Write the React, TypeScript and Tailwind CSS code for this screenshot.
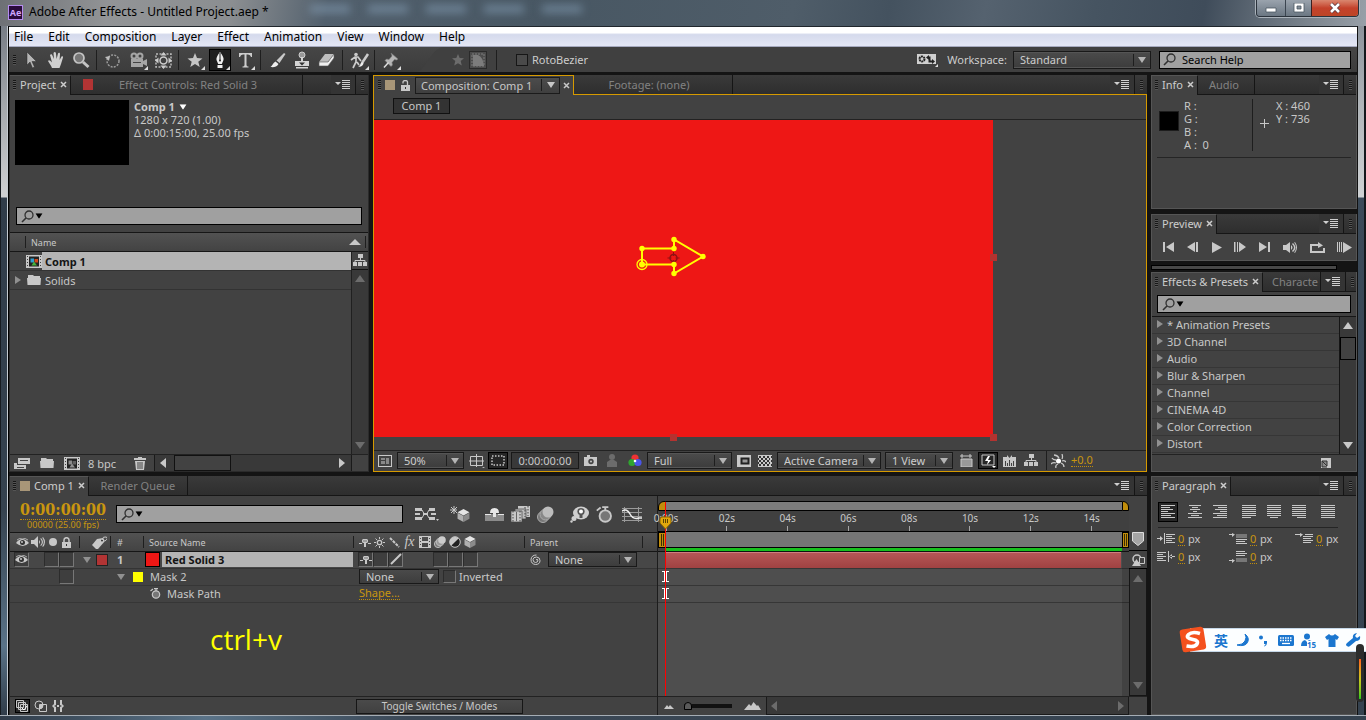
import type { ReactNode } from "react"
import { clsx } from "clsx"

const menus = ["File", "Edit", "Composition", "Layer", "Effect", "Animation", "View", "Window", "Help"]

const effectGroups = [
  "* Animation Presets",
  "3D Channel",
  "Audio",
  "Blur & Sharpen",
  "Channel",
  "CINEMA 4D",
  "Color Correction",
  "Distort",
]

const seconds = ["0:00s", "02s", "04s", "06s", "08s", "10s", "12s", "14s"]

type IconProps = { w?: number; h?: number; children: ReactNode; className?: string }

function Icon({ w = 16, h = 16, children, className }: IconProps) {
  return (
    <svg
      width={w}
      height={h}
      viewBox={`0 0 ${w} ${h}`}
      fill="currentColor"
      className={clsx("shrink-0", className)}
      aria-hidden="true"
    >
      {children}
    </svg>
  )
}

function Caret({ className }: { className?: string }) {
  return (
    <Icon w={8} h={6} className={className}>
      <path d="M0 0h8L4 6z" />
    </Icon>
  )
}

function RightTri({ className }: { className?: string }) {
  return (
    <Icon w={6} h={8} className={className}>
      <path d="M0 0l6 4-6 4z" />
    </Icon>
  )
}

function ArrowHead({ dir, className }: { dir: "up" | "down" | "left" | "right"; className?: string }) {
  const paths = { up: "M0 8h10L5 1z", down: "M0 2h10L5 9z", left: "M8 0v10L2 5z", right: "M2 0v10l6-5z" }
  return (
    <Icon w={10} h={10} className={className}>
      <path d={paths[dir]} />
    </Icon>
  )
}

function Grip() {
  return <span className="h-[10px] w-[3px] shrink-0 bg-[repeating-linear-gradient(#171717_0_1px,#555_1px_2px)]" />
}

function Divider({ className }: { className?: string }) {
  return <span className={clsx("w-px shrink-0 bg-[#1e1e1e]", className)} />
}

/* Tab strip shared by every panel */
function TabStrip({ children, gold }: { children: ReactNode; gold?: boolean }) {
  return (
    <div
      className={clsx(
        "flex h-5 shrink-0 border-b bg-linear-to-b from-[#3a3a3a] to-[#2e2e2e]",
        gold ? "border-[#d69a00]" : "border-[#161616]",
      )}
    >
      {children}
      <span className="min-w-0 flex-1" />
      <button type="button" aria-label="Panel menu" className="z-10 flex w-6 shrink-0 items-center justify-center bg-[#343434] pr-[2px] pb-px text-[#cfcfcf]">
        <Icon w={15} h={9}>
          <path d="M0 2h6L3 5zM7 0h8v1H7zM7 2h8v1H7zM7 4h8v1H7zM7 6h8v1H7zM7 8h8v1H7z" />
        </Icon>
      </button>
      <span className="flex w-[13px] shrink-0 items-center justify-center border-l border-[#151515]">
        <Grip />
      </span>
    </div>
  )
}

function ActiveTab({ label, children }: { label: string; children?: ReactNode }) {
  return (
    <div className="-mb-px flex shrink-0 items-center gap-1 border-t border-r border-t-[#555] border-r-[#161616] bg-[#424242] pr-[3px] pb-[2px] pl-[3px]">
      <Grip />
      {children}
      <button type="button" className="text-[#cdcdcd]">{label}</button>
      <button type="button" aria-label={`Close ${label}`} className="text-[#cdcdcd]">
        <Icon w={7} h={7}>
          <path d="M1 1l5 5M6 1L1 6" stroke="currentColor" strokeWidth="1.5" />
        </Icon>
      </button>
    </div>
  )
}

function Tab({ label, className }: { label: string; className?: string }) {
  return (
    <button type="button" className={clsx("shrink-0 border-r border-[#151515] text-[#828282]", className)}>
      {label}
    </button>
  )
}

type DropdownProps = { label: string; value: string; className?: string; compact?: boolean }

function Dropdown({ label, value, className, compact }: DropdownProps) {
  return (
    <span className={clsx("relative flex shrink-0 border border-[#191919]", className)}>
      <select
        aria-label={label}
        className={clsx(
          "w-full appearance-none bg-linear-to-b from-[#4a4a4a] to-[#3d3d3d] pr-4 pl-[6px] text-[#cdcdcd]",
          !compact && "border-y border-[#555] pb-[2px]",
        )}
      >
        <option>{value}</option>
      </select>
      <span className="pointer-events-none absolute inset-y-[2px] right-1 flex items-center gap-1 text-[#b4b4b4]">
        <Divider className="h-full" />
        <Caret />
      </span>
    </span>
  )
}

function SearchIcon() {
  return (
    <Icon w={13} h={13} className="text-[#303030]">
      <circle cx="8" cy="5" r="4" fill="none" stroke="currentColor" strokeWidth="1.3" />
      <path d="M5 8L1 12" stroke="currentColor" strokeWidth="1.6" />
    </Icon>
  )
}

function SearchBox({ label, className }: { label: string; className?: string }) {
  return (
    <label className={clsx("flex h-[18px] items-center gap-px border border-black bg-[#a0a0a0] px-1 text-black", className)}>
      <SearchIcon />
      <Caret className="scale-90" />
      <input type="text" aria-label={label} className="w-full min-w-0 outline-none" />
    </label>
  )
}

function TitleBar() {
  return (
    <header className="flex h-[26px] shrink-0 items-start bg-[linear-gradient(100deg,#6d7075_0%,#929496_8%,#8b8e91_17%,#52606d_24%,#485763_40%,#4f5d69_58%,#44525f_65%,#55626f_72%,#465461_80%,#3f4c5a_88%,#7d868f_96%,#98a0a8_100%)]">
      <div className="flex w-[290px] shrink-0 items-center gap-[6px] pt-1 pl-2">
        <span className="flex h-[15px] w-[15px] items-center justify-center border border-[#b58cf0] bg-[#2a0b3c] text-[9px] font-bold text-[#cda6ff]">
          Ae
        </span>
        <h1 className="text-[12px] leading-4 text-black">Adobe After Effects - Untitled Project.aep *</h1>
      </div>
      <div className="flex flex-1 gap-[18px] pt-[5px] pl-5">
        {[0, 1, 2, 3, 4].map((n) => (
          <span key={n} className="h-2 w-10 bg-[#8da9c4]/50 blur-xs" />
        ))}
      </div>
      <div className="mr-[7px] flex h-[17px] overflow-hidden rounded-b-[4px] border border-t-0 border-[#2b333c] text-white shadow-[0_0_0_1px_#aab2ba]">
        <button type="button" aria-label="Minimize" className="flex w-7 items-center justify-center bg-linear-to-b from-[#9aa3ad] to-[#6b7783]">
          <Icon w={12} h={10}>
            <path d="M1 5h10v4H1z" stroke="#4a5561" strokeWidth=".8" />
          </Icon>
        </button>
        <button type="button" aria-label="Restore" className="flex w-[26px] items-center justify-center border-l border-[#3b4550] bg-linear-to-b from-[#9aa3ad] to-[#6b7783]">
          <Icon w={12} h={10}>
            <path fillRule="evenodd" d="M1 0h10v9H1zM4 3v3h4V3z" stroke="#4a5561" strokeWidth=".8" />
          </Icon>
        </button>
        <button type="button" aria-label="Close" className="flex w-[47px] items-center justify-center border-l border-[#3b2020] bg-linear-to-b from-[#d9866f] via-[#c4412b] to-[#bd4526]">
          <Icon w={12} h={12}>
            <path d="M2 2l8 8M10 2l-8 8" stroke="#53333a" strokeWidth="4" />
            <path d="M2 2l8 8M10 2l-8 8" stroke="#fff" strokeWidth="2.6" />
          </Icon>
        </button>
      </div>
    </header>
  )
}

function MenuBar() {
  return (
    <nav className="flex h-[21px] shrink-0 items-center gap-[15px] border-t border-b border-t-[#20262c] border-b-[#a6aabf] bg-linear-to-b from-white from-30% via-[#d5daec] via-40% to-[#e4e7f5] px-[5px] text-[12px] text-black">
      {menus.map((menu) => (
        <button type="button" key={menu}>
          {menu}
        </button>
      ))}
    </nav>
  )
}

const corner = <path d="M21 21v-4l-4 4z" fill="#ddd" />

const tools: { name: string; active?: boolean; art: ReactNode }[][] = [
  [
    { name: "Selection", art: <path d="M7 3v13l3-3 2.500 6 2-1-2.500-5.500h4.500z" fill="#b5b5b5" stroke="#2a2a2a" strokeWidth=".5" /> },
    {
      name: "Hand",
      art: (
        <path
          d="M7 19c-1-3-3-5-4-7 1-1.500 2-.5 4 1.500L5 6c1-1.300 2-.6 2.400.5L9 10 8.500 4c.7-1.400 2-1.300 2.400 0l.7 6L13 4.500c.7-1.200 2-.8 2 .5l-.4 6 1.900-3.500c1-.9 1.800 0 1.500 1L16 15l-1.500 4z"
          fill="#cfcfcf"
        />
      ),
    },
    {
      name: "Zoom",
      art: (
        <>
          <circle cx="9" cy="9" r="5" fill="#777" stroke="#c5c5c5" strokeWidth="1.700" />
          <path d="M13 13l5.500 5" stroke="#c5c5c5" strokeWidth="3" />
        </>
      ),
    },
  ],
  [
    {
      name: "Rotate",
      art: (
        <>
          <circle cx="11" cy="12" r="6" fill="none" stroke="#9a9a9a" strokeWidth="1.500" strokeDasharray="2 1.200" />
          <path d="M3 8l5-1-1 5z" fill="#bdbdbd" />
        </>
      ),
    },
    {
      name: "Camera",
      art: (
        <>
          <circle cx="7" cy="7" r="2.500" fill="none" stroke="#a5a5a5" strokeWidth="2" />
          <circle cx="13" cy="7" r="2.500" fill="none" stroke="#a5a5a5" strokeWidth="2" />
          <path d="M4 10h12v2l4-2v7l-4-2v3H4z" fill="#a5a5a5" />
          <path d="M6 13h8v1H6z" fill="#444" />
          {corner}
        </>
      ),
    },
    {
      name: "Pan Behind",
      art: (
        <>
          <path d="M4 5h15v13H4z" fill="none" stroke="#bbb" strokeWidth="1.500" strokeDasharray="2 1.500" />
          <circle cx="11.500" cy="11.500" r="3.500" fill="none" stroke="#ccc" strokeWidth="1.500" />
          <path d="M11.500 3l3 3.500h-6zM11.500 20l3-3.500h-6zM3 11.500l3.500-3v6zM20 11.500l-3.500-3v6z" fill="#ccc" />
        </>
      ),
    },
  ],
  [
    {
      name: "Shape",
      art: (
        <>
          <path d="M11 4l2 5 5.500.4-4.200 3.400L15.700 18 11 15l-4.700 3 1.400-5.200-4.200-3.400L9 9z" fill="#c5c5c5" />
          {corner}
        </>
      ),
    },
    {
      name: "Pen",
      active: true,
      art: (
        <>
          <path d="M11 3c2.500 3 4 6 3.500 8l-1.700 4H9.200l-1.700-4C7 9 8.500 6 11 3zM8.500 16h5v3h-5z" fill="#f0f0f0" />
          <path d="M11 4v7" stroke="#222" />
          <circle cx="11" cy="11.500" r="1" fill="#222" />
          {corner}
        </>
      ),
    },
    {
      name: "Type",
      art: (
        <>
          <path d="M5 4h13v4h-1q-.5-2.500-3-2.500h-1.500V16q0 1.500 2 1.500v1h-6v-1q2 0 2-1.500V5.500H9Q6.500 5.500 6 8H5z" fill="#cdcdcd" />
          {corner}
        </>
      ),
    },
  ],
  [
    {
      name: "Brush",
      art: (
        <>
          <path d="M18 4l1.500 1-6 9-3-2.500z" fill="#c9c9c9" />
          <path d="M9.500 12.500l3 2.500c-1.500 3-5 3.500-8 3 2-1 2.500-4.500 5-5.500z" fill="#eee" />
        </>
      ),
    },
    {
      name: "Clone Stamp",
      art: (
        <>
          <circle cx="11" cy="6" r="3" fill="#999" stroke="#ccc" />
          <path d="M10 8h2v4h6v5H4v-5h6zM5 18h12v1.500H5z" fill="#d4d4d4" />
          <path d="M8 13.500h6L11 16.500z" fill="#333" />
        </>
      ),
    },
    {
      name: "Eraser",
      art: (
        <>
          <path d="M9 5h9l-6 8H3z" fill="#bdbdbd" />
          <path d="M3 13h9l6-8v4l-6 8H3z" fill="#f0f0f0" stroke="#555" strokeWidth=".6" />
        </>
      ),
    },
  ],
  [
    {
      name: "Roto Brush",
      art: (
        <>
          <circle cx="8" cy="5.500" r="1.800" fill="#ccc" />
          <path d="M3 11l4-3h3l3 4M8 8v5l-3 6M9 13l2 3" fill="none" stroke="#ccc" strokeWidth="1.700" />
          <path d="M20 5l-6 9" stroke="#ccc" strokeWidth="2.500" />
          <path d="M14 13c-2 1-1 3.500-4 4.500 3 .5 5-.5 5.500-3z" fill="#eee" />
          {corner}
        </>
      ),
    },
  ],
  [
    {
      name: "Puppet Pin",
      art: (
        <>
          <path d="M11 4l7 6-1.500 1-2-.5-2.500 3 .5 2.500-1.500 1.500-6-6L6.500 10 9 10.500 12 7z" fill="#b5b5b5" stroke="#777" strokeWidth=".6" />
          <path d="M8.500 13.500L4 18.500" stroke="#ddd" strokeWidth="1.500" />
          {corner}
        </>
      ),
    },
  ],
]

function Toolbar() {
  return (
    <div className="flex h-[25px] shrink-0 items-center bg-linear-to-b from-[#464646] to-[#3c3c3c] pr-[6px] pl-1 text-[#cdcdcd]">
      <Grip />
      <span className="w-[2px]" />
      {tools.map((group, g) => (
        <div key={g} className="flex items-center">
          {group.map((tool) => (
            <span key={tool.name} className="flex w-[25px] justify-center">
              <button
                type="button"
                aria-label={tool.name}
                className={clsx("flex h-[22px] w-[22px] items-center justify-center", tool.active && "border border-black bg-[#202020]")}
              >
                <Icon w={22} h={22}>{tool.art}</Icon>
              </button>
            </span>
          ))}
          {g < tools.length - 1 && <Divider className="mr-[3px] ml-[3px] h-5" />}
        </div>
      ))}
      <Icon w={42} h={25}>
        <path d="M13 25c10 0 14-25 29-25v25z" fill="#404040" />
      </Icon>
      <div className="flex h-full flex-1 items-center bg-[#404040]">
        <Icon w={14} h={14} className="mr-1 ml-[6px] text-[#6c6c6c]">
          <path d="M7 1l1.700 4 4.300.3-3.300 2.800 1.100 4.400L7 10.200l-3.800 2.300 1.100-4.400L1 5.300 5.300 5z" />
        </Icon>
        <button type="button" aria-label="Tool creates mask" className="border border-[#2a2a2a] bg-[#4c4c4c] text-[#7c7c7c]">
          <Icon w={16} h={16}>
            <path d="M2 2h12v12H2z" fill="none" stroke="currentColor" strokeDasharray="2 1" />
            <path d="M3 3h5q5 2 6 11H3z" />
          </Icon>
        </button>
        <Divider className="mx-[9px] h-5" />
        <label className="ml-[10px] flex items-center gap-1">
          <input type="checkbox" className="h-3 w-3 appearance-none border border-[#161616] bg-[#4a4a4a]" />
          RotoBezier
        </label>
        <span className="flex-1" />
        <Icon w={23} h={16} className="mr-2">
          <path d="M1 2h19v10H1z" fill="#d0d0d0" />
          <circle cx="6" cy="7" r="2.500" fill="none" stroke="#222" strokeWidth="2" strokeDasharray="2 .6" />
          <path d="M10 5.500L13 3v1.500h1.500v4H16V7l3 2.500-3 2.500v-1.500h-3.500v-4H13V8z" fill="#222" />
          <path d="M22 15v-3l-3 3z" fill="#ddd" />
        </Icon>
        <span className="mr-[6px]">Workspace:</span>
        <Dropdown label="Workspace" value="Standard" className="h-[18px] w-[138px]" />
        <label className="ml-2 flex h-[18px] w-[192px] items-center gap-[6px] border border-black bg-[#a0a0a0] px-[3px]">
          <SearchIcon />
          <input type="text" aria-label="Search Help" placeholder="Search Help" className="w-full min-w-0 outline-none placeholder:text-black" />
        </label>
      </div>
    </div>
  )
}

function FlowIcon() {
  return (
    <Icon w={14} h={13}>
      <path d="M5 0h5v4H5zM0 8h4v4H0zM5 8h4v4H5zM10 8h4v4h-4z" />
      <path d="M7.500 4v3M2 8V6.500h10V8" fill="none" stroke="currentColor" />
    </Icon>
  )
}

function FilmIcon() {
  return (
    <Icon w={16} h={13}>
      <path fillRule="evenodd" d="M0 0h16v13H0zM4 2v9h8V2zM1 1v1h1V1zm0 3v1h1V4zm0 3v1h1V7zm0 3v1h1v-1zM14 1v1h1V1zm0 3v1h1V4zm0 3v1h1V7zm0 3v1h1v-1z" />
      <path d="M3 1.500h10v10H3z" fill="#222" />
      <path d="M4.500 3.500h3.500v4H4.500z" fill="#2f9fd0" />
      <path d="M8.500 4H12v3.500H8.500z" fill="#d2481c" />
      <path d="M5.500 10.500l2.500-4 3 4z" fill="#45b13c" />
    </Icon>
  )
}

function FolderIcon() {
  return (
    <Icon w={14} h={12}>
      <path d="M1 1h5l1 1h6v2H1zM0 4h14l-.5 7H.5z" />
    </Icon>
  )
}

function ProjectPanel() {
  return (
    <section className="flex w-[360px] shrink-0 flex-col border border-t-0 border-[#2b2b2b] bg-[#424242]">
      <TabStrip>
        <ActiveTab label="Project" />
        <button type="button" className="flex w-[232px] items-center gap-[26px] border-r border-[#151515] pl-3 text-[#828282]">
          <span className="h-[11px] w-[10px] bg-[#b23434]" />
          Effect Controls: Red Solid 3
        </button>
      </TabStrip>
      <div className="flex gap-[5px] px-[5px] pt-[5px]">
        <div className="h-[65px] w-[114px] bg-black" />
        <div className="leading-[13px]">
          <p className="flex items-center gap-1 font-bold">
            Comp 1 <Caret className="scale-90 text-white" />
          </p>
          <p>1280 x 720 (1.00)</p>
          <p>Δ 0:00:15:00, 25.00 fps</p>
        </div>
      </div>
      <SearchBox label="Search project" className="mx-[6px] mt-[42px]" />
      <div className="mt-[7px] flex h-5 shrink-0 items-center border-y border-[#161616] bg-linear-to-b from-[#525252] to-[#434343] px-[2px] text-[9px]">
        <Divider className="ml-[13px] h-3" />
        <span className="flex-1 pl-[5px]">Name</span>
        <Icon w={12} h={7}>
          <path d="M0 6h12L6 0z" />
        </Icon>
        <Divider className="ml-1 h-3" />
      </div>
      <div className="flex min-h-0 flex-1">
        <div className="flex-1">
          <button type="button" className="flex h-[19px] w-full items-center border-b border-[#333] pl-4">
            <FilmIcon />
            <span className="flex h-full flex-1 items-center bg-[#b4b4b4] pl-[3px] font-bold text-[#151515]">Comp 1</span>
          </button>
          <button type="button" className="flex h-[19px] w-full items-center border-b border-[#333] pl-[5px]">
            <RightTri className="mr-[6px] text-[#909090]" />
            <FolderIcon />
            <span className="pl-1">Solids</span>
          </button>
        </div>
        <div className="flex w-[17px] flex-col items-center border-l border-[#202020] bg-[#393939] text-[#6c6c6c]">
          <span className="flex h-[18px] w-full items-center justify-center border-b border-[#111] bg-[#424242] text-[#c8c8c8]">
            <FlowIcon />
          </span>
          <ArrowHead dir="up" className="mt-1" />
          <span className="flex-1" />
          <ArrowHead dir="down" className="mb-1" />
        </div>
      </div>
      <div className="flex h-[17px] shrink-0 items-center border-t border-[#222] pl-1">
        <button type="button" aria-label="Interpret footage">
          <Icon w={16} h={13}>
            <path d="M4 1h12v6H4zM0 6h3v6H0zM1 8h11v4H1z" />
            <path d="M6 3h8v1H6zM3 10h7v1H3z" fill="#444" />
          </Icon>
        </button>
        <button type="button" aria-label="New folder" className="ml-[10px]"><FolderIcon /></button>
        <button type="button" aria-label="New composition" className="ml-[10px] grayscale"><FilmIcon /></button>
        <button type="button" className="ml-2 w-[46px] text-left">8 bpc</button>
        <button type="button" aria-label="Delete">
          <Icon w={12} h={13}>
            <path d="M4 0h4v1h4v2H0V1h4zM1 4h10l-1 9H2z" />
            <path d="M4 5v7M6 5v7M8 5v7" stroke="#444" />
          </Icon>
        </button>
        <div className="ml-2 flex h-full flex-1 items-center border-x border-[#1a1a1a] bg-[#393939]">
          <ArrowHead dir="left" className="mr-[6px] ml-[3px]" />
          <span className="h-full w-[57px] border border-[#111] bg-[#424242]" />
          <span className="flex-1" />
          <ArrowHead dir="right" className="mr-1" />
        </div>
        <span className="w-4" />
      </div>
    </section>
  )
}

function Viewer() {
  return (
    <div className="relative min-h-0 flex-1 overflow-hidden border-t border-[#222] bg-[#424242]">
      <div className="h-[317px] w-[619px] bg-[#ee1715]" />
      {/* mask path and layer handles on the composition canvas */}
      <svg className="absolute top-0 left-0" width="630" height="325" viewBox="0 0 630 325" aria-hidden="true">
        <path d="M616 134h7v7h-7zM616 314h7v7h-7zM296 314h7v7h-7z" fill="#b33330" />
        <circle cx="299.500" cy="138" r="3.500" fill="none" stroke="#8e1212" strokeWidth="1.500" />
        <path d="M293.500 138h4M301.500 138h4M299.500 132v4M299.500 140v4" stroke="#8e1212" />
        <path d="M268 144.500v-16h32v-9l29 17-29 17v-9z" fill="none" stroke="#ff0" strokeWidth="2" />
        <g fill="#ff0">
          <circle cx="268" cy="128.500" r="2.700" />
          <circle cx="300" cy="128.500" r="2.700" />
          <circle cx="300" cy="119.500" r="2.700" />
          <circle cx="329" cy="136.500" r="2.700" />
          <circle cx="300" cy="153.500" r="2.700" />
          <circle cx="300" cy="144.500" r="2.700" />
          <circle cx="268" cy="144.500" r="3" />
        </g>
        <circle cx="268" cy="144.500" r="5" fill="none" stroke="#ff0" strokeWidth="1.300" />
      </svg>
    </div>
  )
}

function CompositionPanel() {
  return (
    <section className="flex min-w-0 flex-1 flex-col">
      <TabStrip gold>
        <div className="-mb-px flex w-[201px] items-center border border-b-0 border-[#d69a00] bg-[#424242] pb-px pl-1">
          <Grip />
          <span className="ml-[4px] h-[10px] w-[10px] bg-[#a89678]" />
          <Icon w={9} h={11} className="mr-[5px] ml-[6px]">
            <path d="M0 5h9v6H0z" />
            <path d="M2 3.500V2.500q0-2 2.300-2t2.200 2V5" fill="none" stroke="currentColor" strokeWidth="1.300" />
            <path d="M4 7h1v2H4z" fill="#333" />
          </Icon>
          <button type="button" className="flex h-[17px] flex-1 items-center justify-between border border-[#1b1b1b] bg-linear-to-b from-[#4c4c4c] to-[#3f3f3f] pr-1 pl-[5px]">
            Composition: Comp 1
            <span className="flex items-center gap-[5px]">
              <Divider className="h-3" />
              <Caret />
            </span>
          </button>
          <button type="button" aria-label="Close Composition" className="px-[3px]">
            <Icon w={7} h={7}>
              <path d="M1 1l5 5M6 1L1 6" stroke="currentColor" strokeWidth="1.500" />
            </Icon>
          </button>
        </div>
        <Tab label="Footage: (none)" className="w-[159px] pr-2" />
      </TabStrip>
      <div className="flex min-h-0 flex-1 flex-col border border-t-0 border-[#d69a00] bg-[#424242]">
        <div className="flex h-6 shrink-0 pt-[3px] pl-[19px]">
          <button type="button" className="h-4 w-[57px] border border-[#111] bg-[#333] leading-3">Comp 1</button>
        </div>
        <Viewer />
        <div className="flex h-[21px] shrink-0 items-center border-t border-[#222] pb-px pl-1">
          <Icon w={14} h={12} className="mr-[5px]">
            <path fillRule="evenodd" d="M0 0h14v12H0zM1 1v10h12V1z" />
            <path d="M3 3h4v2H3zM3 6h4v3H3zM8 3h3v6H8z" fill="#888" />
          </Icon>
          <Dropdown label="Magnification" value="50%" className="h-[17px] w-[67px]" />
          <Icon w={16} h={15} className="ml-[5px]">
            <path d="M1.500 3.500h12v9h-12zM0 8h15M7.500 1v13" fill="none" stroke="currentColor" />
            <path d="M13 14h3l-1.500 1z" />
          </Icon>
          <button type="button" aria-label="Region of interest" className="mx-[3px] border border-black bg-[#262626]">
            <Icon w={18} h={15}>
              <path d="M3 3h12v9H3z" fill="none" stroke="currentColor" strokeWidth="1.500" strokeDasharray="1.500 1.500" />
            </Icon>
          </button>
          <button type="button" className="h-[17px] w-[68px] border border-[#191919] bg-[#393939]">0:00:00:00</button>
          <Icon w={13} h={11} className="ml-[5px]">
            <path d="M0 2h3V0h3v2h7v9H0z" />
            <circle cx="7" cy="6.500" r="2.700" fill="#444" />
            <circle cx="7" cy="6.500" r="1" />
          </Icon>
          <Icon w={12} h={13} className="ml-[9px] text-[#6c6c6c]">
            <circle cx="6" cy="3" r="3" />
            <path d="M1 13V8l3-2h4l3 2v5z" />
          </Icon>
          <Icon w={15} h={13} className="mr-1 ml-[10px]">
            <circle cx="7" cy="4" r="3.600" fill="#e33" />
            <circle cx="4" cy="8.500" r="3.600" fill="#2fa52f" />
            <circle cx="10" cy="8.500" r="3.600" fill="#4a55ea" />
            <circle cx="7" cy="7" r="1.300" fill="#fff" />
          </Icon>
          <Dropdown label="Resolution" value="Full" className="h-[17px] w-[85px]" />
          <Icon w={14} h={12} className="ml-[5px]">
            <path d="M0 0h14v12H0z" />
            <path d="M4.500 3.500h7v5h-7z" fill="#999" stroke="#222" strokeWidth="2" />
          </Icon>
          <Icon w={14} h={12} className="mr-[5px] ml-[7px]">
            <path d="M0 0h14v12H0z" />
            <path d="M1 2h13M-1 4h13M1 6h13M-1 8h13M1 10h13" stroke="#333" strokeWidth="2" strokeDasharray="2 2" />
          </Icon>
          <Dropdown label="3D view" value="Active Camera" className="h-[17px] w-[104px]" />
          <Dropdown label="View layout" value="1 View" className="ml-1 h-[17px] w-[68px]" />
          <Icon w={13} h={13} className="mr-[5px] ml-[7px]">
            <path d="M1 5h11v8H1z" fill="#999" stroke="currentColor" />
            <path d="M0 2h12M2 0v4M10 0v4" stroke="currentColor" />
          </Icon>
          <button type="button" aria-label="Fast previews" className="border border-black bg-[#262626]">
            <Icon w={18} h={15}>
              <path d="M3 2h12v10H3z" fill="none" stroke="currentColor" />
              <path d="M9 3L6 8h3l-1 4 4-5H9l2-4zM13 13h4l-2 2z" fill="#fff" />
            </Icon>
          </button>
          <Icon w={13} h={12} className="ml-[5px]">
            <path fillRule="evenodd" d="M0 2h4v-2l2.500 3L9 0v2h4v10H0zM2 6v5h1V6zm4-1v6h1V5zm4 1v5h1V6zM4 8v3h1V8zm4 0v3h1V8z" />
          </Icon>
          <span className="mx-2"><FlowIcon /></span>
          <Divider className="h-[19px]" />
          <Icon w={15} h={14} className="mx-1">
            <circle cx="7.500" cy="7" r="2.500" fill="#fff" />
            <path d="M8 4Q6 1 3 1M11 5q1-2 0-5M11 7q2-1 4 1M10 9q3 1 3 4M7 10q-3 1-2 4M5 9q-3-1-5 1M5 6Q2 6 1 4" fill="none" stroke="currentColor" strokeWidth="1.300" />
          </Icon>
          <button type="button" className="ml-px border-b border-dotted border-[#c08d0c] leading-3 text-[#c9960f]">+0.0</button>
        </div>
      </div>
    </section>
  )
}

const transport: { name: string; w: number; path: string }[] = [
  { name: "First frame", w: 12, path: "M0 0h2v10H0zM11 0v10L3 5z" },
  { name: "Previous frame", w: 12, path: "M8 0v10L0 5zM9 0h2v10H9z" },
  { name: "Play", w: 10, path: "M0 0v11l10-5.500z" },
  { name: "Next frame", w: 12, path: "M0 0h1.500v10H0zM3 0h1v10H3zM5 0v10l7-5z" },
  { name: "Last frame", w: 12, path: "M0 0v10l8-5zM9 0h2v10H9z" },
  { name: "Mute audio", w: 14, path: "M0 3h3l4-3v11L3 8H0zM8 3q3 2.500 0 5zM10 1q5 4.500 0 9l-1-1q4-3.500 0-7zM12 0q4 5.500 0 11l-.8-.6q3.600-5 0-9.800z" },
  { name: "Loop", w: 15, path: "M0 2h8V0l5 3.500L8 6V4H2v5h11V6h2v5H0z" },
  { name: "RAM preview", w: 15, path: "M0 0h1v10H0zM2 0h1v10H2zM4 0h1v10H4zM6 0v11l9-5.500z" },
]

function RightColumn() {
  return (
    <aside className="flex w-[206px] shrink-0 flex-col">
      <section className="flex h-[134px] shrink-0 flex-col border border-t-0 border-[#555] bg-[#424242]">
        <TabStrip>
          <ActiveTab label="Info" />
          <Tab label="Audio" className="w-[57px] pr-1" />
        </TabStrip>
        <div className="flex px-[7px] pt-1">
          <span className="mt-3 h-5 w-5 border border-[#1d1d1d] bg-black" />
          <div className="ml-[5px] w-[69px] border-r border-[#1e1e1e] leading-[13px]">
            <p>R :</p>
            <p>G :</p>
            <p>B :</p>
            <p>A :&nbsp; 0</p>
          </div>
          <Icon w={10} h={10} className="mt-5 ml-[7px]">
            <path d="M4.500 0v9M0 4.500h9" stroke="currentColor" />
          </Icon>
          <div className="ml-[6px] leading-[13px]">
            <p>X : 460</p>
            <p>Y : 736</p>
          </div>
        </div>
        <span className="mx-[5px] mt-[6px] h-px bg-[#252525]" />
      </section>

      <section className="mt-[5px] flex shrink-0 flex-col border border-t-0 border-[#555] bg-[#424242]">
        <TabStrip>
          <ActiveTab label="Preview" />
        </TabStrip>
        <div className="flex h-[26px] items-center justify-between pr-1 pl-[11px]">
          {transport.map((button) => (
            <button type="button" key={button.name} aria-label={button.name}>
              <Icon w={button.w} h={11}>
                <path d={button.path} />
              </Icon>
            </button>
          ))}
        </div>
      </section>

      <span className="mt-1 mr-5 mb-[2px] h-[5px] shrink-0 border border-black bg-[#484848]" />

      <section className="flex min-h-0 flex-1 flex-col border border-t-0 border-[#555] bg-[#424242]">
        <TabStrip>
          <ActiveTab label="Effects & Presets" />
          <button type="button" className="w-[58px] shrink-0 border-r border-[#151515] pl-[9px] text-left whitespace-nowrap text-[#828282]">
            Characte
          </button>
        </TabStrip>
        <SearchBox label="Search effects" className="mx-[5px] mt-[3px] shrink-0" />
        <div className="mt-[3px] flex min-h-0 flex-1 border-t border-[#161616]">
          <ul className="min-w-0 flex-1 overflow-hidden">
            {effectGroups.map((name) => (
              <li key={name}>
                <button type="button" className="flex h-[17px] w-full items-center gap-1 border-b border-[#363636] pb-[2px] pl-[5px]">
                  <RightTri className="text-[#909090]" />
                  {name}
                </button>
              </li>
            ))}
          </ul>
          <div className="flex w-[17px] flex-col items-center border-l border-[#151515] bg-[#393939]">
            <ArrowHead dir="up" className="my-1" />
            <span className="mt-[2px] h-[23px] w-full border border-black bg-[#424242]" />
            <span className="flex-1" />
            <ArrowHead dir="down" className="mb-1" />
          </div>
        </div>
        <div className="flex h-[17px] shrink-0 items-center justify-end border-t border-[#222] pr-[25px]">
          <button type="button" aria-label="New animation preset">
            <Icon w={10} h={10}>
              <path d="M0 0h10v10H0z" />
              <path d="M1 3h5v5zM1 3v6h5" fill="#888" stroke="#333" />
            </Icon>
          </button>
        </div>
      </section>
    </aside>
  )
}

const EyeIcon = () => (
  <Icon w={13} h={9}>
    <path d="M0 5q6-8 13 0-6 6-13 0z" />
    <circle cx="6.500" cy="4.500" r="2.500" fill="#333" />
    <circle cx="6" cy="4" r="1" />
    <path d="M1 2q5-4 11 0" fill="none" stroke="currentColor" strokeWidth=".8" />
  </Icon>
)

const ShyIcon = () => (
  <Icon w={12} h={9}>
    <path d="M0 5h3v1H0zM9 5h3v1H9zM4 1h4l1 1v2L8 5H7v4H5V5H4L3 4V2z" />
    <path d="M4.500 2.500h1v1h-1zM6.500 2.500h1v1h-1z" fill="#222" />
  </Icon>
)

const CubeIcon = ({ size = 12 }: { size?: number }) => (
  <svg width={size} height={size} viewBox="0 0 12 12" aria-hidden="true">
    <path d="M6 0l5.500 3L6 6 .5 3z" fill="#e5e5e5" />
    <path d="M.5 3.500L6 6.500V12L.5 9z" fill="#b0b0b0" />
    <path d="M11.500 3.500L6 6.500V12l5.500-3z" fill="#8a8a8a" />
  </svg>
)

const StopwatchIcon = ({ size = 11 }: { size?: number }) => (
  <svg width={size} height={size} viewBox="0 0 11 11" fill="none" stroke="#c8c8c8" aria-hidden="true">
    <circle cx="6" cy="6.500" r="3.700" strokeWidth="1.200" fill="#777" />
    <path d="M4 .7h4M6 1v2M.5 3L3 1" strokeWidth="1.200" />
  </svg>
)

const headerIcons: { name: string; art: ReactNode }[] = [
  { name: "Shy", art: <ShyIcon /> },
  {
    name: "Collapse",
    art: (
      <Icon w={11} h={11}>
        <circle cx="5.500" cy="5.500" r="2.200" fill="none" stroke="currentColor" strokeWidth="1.300" />
        <path d="M5.500 0v2M5.500 9v2M0 5.500h2M9 5.500h2M1.500 1.500L3 3M8 8l1.500 1.500M9.500 1.500L8 3M3 8L1.500 9.500" stroke="currentColor" />
      </Icon>
    ),
  },
  {
    name: "Quality",
    art: (
      <Icon w={11} h={11}>
        <path d="M1 1l9 9" stroke="currentColor" strokeWidth="2" strokeDasharray="3 1" />
      </Icon>
    ),
  },
  { name: "Effects", art: <span className="font-['Liberation_Serif',serif] text-[14px] leading-3 italic">fx</span> },
  {
    name: "Frame blend",
    art: (
      <Icon w={12} h={12}>
        <path fillRule="evenodd" d="M0 0h12v12H0zM3 1v4h6V1zM3 7v4h6V7zM1 2v1h1V2zm0 3v1h1V5zm0 3v1h1V8zm9-6v1h1V2zm0 3v1h1V5zm0 3v1h1V8z" />
      </Icon>
    ),
  },
  {
    name: "Motion blur",
    art: (
      <Icon w={12} h={12}>
        <circle cx="4" cy="8" r="3.600" fill="#777" stroke="#bbb" />
        <circle cx="6" cy="6" r="3.800" fill="#999" stroke="#bbb" />
        <circle cx="8" cy="4" r="3.800" fill="#ccc" />
      </Icon>
    ),
  },
  {
    name: "Adjustment",
    art: (
      <Icon w={12} h={12}>
        <circle cx="6" cy="6" r="5.300" fill="#222" stroke="currentColor" />
        <path d="M9.800 2.200A5.300 5.300 0 0 0 2.200 9.800z" />
      </Icon>
    ),
  },
  { name: "3D layer", art: <CubeIcon /> },
]

const timelineActions: { name: string; margin: string; art: ReactNode }[] = [
  {
    name: "Mini flowchart",
    margin: "ml-3",
    art: (
      <Icon w={24} h={14}>
        <path d="M0 1h7v3H0zM0 6h5v2H0zM0 10h7v3H0zM14 1h6v3h-6zM16 6h5v2h-5zM14 10h6v3h-6zM8 6h5v2H8z" />
        <path d="M7 3l2 3.500M14 3l-2 3.500M7 11l2-3.500M14 11l-2-3.500" fill="none" stroke="currentColor" />
        <path d="M21 12h3l-1.500 2z" />
      </Icon>
    ),
  },
  {
    name: "Draft 3D",
    margin: "ml-[11px]",
    art: (
      <span className="flex items-end">
        <Icon w={7} h={16}>
          <path d="M4 0v8M0 4h8M1 1l6 6M7 1L1 7" stroke="currentColor" />
        </Icon>
        <CubeIcon size={13} />
      </span>
    ),
  },
  {
    name: "Hide shy layers",
    margin: "ml-[15px]",
    art: (
      <Icon w={19} h={14}>
        <path d="M0 7h19v7H0z" fill="#8b8b8b" />
        <path d="M5 6q0-5 4.500-5T14 6H11v4H8V6zM0 7h6v1H0zM13 7h6v1h-6z" fill="#e8e8e8" />
      </Icon>
    ),
  },
  {
    name: "Frame blending",
    margin: "ml-[7px]",
    art: (
      <Icon w={19} h={16}>
        <path d="M7 0h12v11H7z" />
        <path d="M4 3h11v10H4z" fill="#bbb" stroke="#444" strokeWidth=".7" />
        <path d="M0 5h11v11H0z" stroke="#444" strokeWidth=".7" />
        <path d="M2 5v11M9 5v11M14 1v10M17 0v10" stroke="#444" strokeDasharray="1.500 1.500" />
        <path d="M5.500 6v9" stroke="#666" />
      </Icon>
    ),
  },
  {
    name: "Motion blur",
    margin: "ml-[7px]",
    art: (
      <Icon w={17} h={17}>
        <circle cx="6" cy="11" r="5.500" fill="#777" stroke="#aaa" />
        <circle cx="8.500" cy="8.500" r="5.500" fill="#888" stroke="#aaa" />
        <circle cx="11" cy="6" r="5.500" fill="#bdbdbd" />
      </Icon>
    ),
  },
  {
    name: "Brainstorm",
    margin: "ml-4",
    art: (
      <Icon w={19} h={17}>
        <ellipse cx="11" cy="7" rx="8" ry="6.500" fill="#cfcfcf" />
        <circle cx="4" cy="12.500" r="2.500" fill="#cfcfcf" />
        <circle cx="1.500" cy="15.500" r="1.200" fill="#cfcfcf" />
        <circle cx="11" cy="5.500" r="3.600" fill="#555" />
        <path d="M9.500 8h3v4h-3z" fill="#555" />
        <circle cx="11" cy="5.500" r="2" fill="#fff" />
      </Icon>
    ),
  },
  { name: "Auto-keyframe", margin: "ml-[7px]", art: <StopwatchIcon size={17} /> },
  {
    name: "Graph editor",
    margin: "ml-[9px]",
    art: (
      <Icon w={20} h={15}>
        <path d="M0 1.500h20M0 5.500h20M0 9.500h20M0 13.500h20M2.500 0v15M16.500 0v15" stroke="#9a9a9a" />
        <path d="M0 4q5-3 8 3t9 4h3" fill="none" stroke="#eee" strokeWidth="1.500" />
      </Icon>
    ),
  },
]

function Cell({ children }: { children?: ReactNode }) {
  return (
    <span className="mr-px flex h-[14px] w-[14px] shrink-0 items-center justify-center border-r border-b border-[#777] bg-[#3e3e3e] shadow-[-1px_-1px_0_#2c2c2c]">
      {children}
    </span>
  )
}

function LayerOutline() {
  return (
    <div className="flex w-[648px] shrink-0 flex-col border-r border-[#1c1c1c]">
      <div className="flex h-[36px] shrink-0 items-center">
        <div className="w-[106px] pt-1 text-center text-[#c9960f]">
          <button type="button" className="block w-full font-['DejaVu_Serif_Condensed','DejaVu_Serif',serif] text-[16px] leading-[14px] font-bold">
            <span className="border-b border-dotted border-[#c08d0c]">0:00:00:00</span>
          </button>
          <p className="mt-[3px] text-[9px] leading-[10px]">00000 (25.00 fps)</p>
        </div>
        <SearchBox label="Search layers" className="w-[287px] shrink-0" />
        {timelineActions.map((action) => (
          <button type="button" key={action.name} aria-label={action.name} className={action.margin}>
            {action.art}
          </button>
        ))}
      </div>

      <div className="flex h-5 shrink-0 items-center border-y border-[#161616] bg-linear-to-b from-[#525252] to-[#434343] text-[9px]">
        <div className="flex w-[69px] items-center gap-[2px] pl-[6px]">
          <EyeIcon />
          <Icon w={14} h={12}>
            <path d="M0 4h3l4-4v12L3 8H0zM8 4q2 2 0 4zM10 2q4 4 0 8l-.7-.7q3-3.300 0-6.600zM12 1q4 5 0 10l-.7-.7q3-4.300 0-8.600z" />
          </Icon>
          <Icon w={13} h={12}>
            <circle cx="6" cy="6" r="4" />
          </Icon>
          <Icon w={9} h={11}>
            <path d="M0 5h9v6H0z" />
            <path d="M2 5V3q0-2.300 2.500-2.300T7 3v2" fill="none" stroke="currentColor" strokeWidth="1.500" />
            <path d="M4 7h1v2H4z" fill="#333" />
          </Icon>
        </div>
        <Divider className="h-3" />
        <div className="flex w-[30px] justify-end pr-[3px]">
          <Icon w={15} h={13}>
            <path d="M0 9l5-6 6-1 2 3-7 8H4z" />
            <circle cx="10" cy="4.500" r="1" fill="#333" />
            <path d="M10 4q1-4 4-3t-1 4" fill="none" stroke="currentColor" />
          </Icon>
        </div>
        <Divider className="h-3" />
        <span className="w-8 pl-[6px]">#</span>
        <Divider className="h-3" />
        <span className="w-[209px] pl-[5px]">Source Name</span>
        <Divider className="h-3" />
        <div className="flex w-[170px] items-center pl-[3px]">
          {headerIcons.map((icon) => (
            <span key={icon.name} className="flex w-[15px] justify-center">{icon.art}</span>
          ))}
        </div>
        <Divider className="h-3" />
        <span className="w-[117px] pl-[5px]">Parent</span>
        <Divider className="h-3" />
      </div>

      <div className="flex h-[17px] shrink-0 items-center border-b border-[#343434] bg-[#474747] pb-px pl-[5px]">
        <Cell><EyeIcon /></Cell>
        <span className="w-[15px]" />
        <Cell />
        <Cell />
        <Caret className="mr-[5px] ml-2 text-[#909090]" />
        <span className="h-3 w-3 border border-[#222] bg-[#b23434]" />
        <span className="w-[37px] pl-[9px] font-bold">1</span>
        <span className="h-[15px] w-[15px] border border-black bg-[#ee1715]" />
        <button type="button" className="ml-[2px] h-[15px] w-[191px] bg-[#b4b4b4] pl-[3px] text-left font-bold text-[#151515]">
          Red Solid 3
        </button>
        <span className="w-[6px]" />
        <Cell><ShyIcon /></Cell>
        <Cell />
        <Cell>
          <Icon w={12} h={12}>
            <path d="M1 11L11 1" stroke="currentColor" strokeWidth="2" />
          </Icon>
        </Cell>
        <span className="w-[30px]" />
        <Cell />
        <Cell />
        <Cell />
        <Icon w={12} h={12} className="mr-[6px] ml-[51px]">
          <path d="M6 6q1-1.500 2 0 0 2.500-2.500 2.500Q3 8.300 3 5.500 3.300 3 6.500 3q3.500.3 3.500 3.500 0 4-4.500 4Q1 10 1 5.500 1.500 1 6.500 1" fill="none" stroke="currentColor" />
        </Icon>
        <Dropdown compact label="Parent layer" value="None" className="h-[15px] w-[89px]" />
      </div>

      <div className="flex h-[17px] shrink-0 items-center border-b border-[#363636] pb-px pl-[50px]">
        <Cell />
        <Caret className="mr-2 ml-[42px] text-[#909090]" />
        <span className="h-[10px] w-[10px] bg-[#ff0]" />
        <span className="w-[216px] pl-[7px]">Mask 2</span>
        <Dropdown compact label="Mask mode" value="None" className="h-[15px] w-[80px]" />
        <label className="flex items-center gap-[3px] pl-1">
          <input type="checkbox" className="h-[13px] w-[13px] appearance-none border border-[#2c2c2c] border-r-[#777] border-b-[#777] bg-[#3e3e3e]" />
          Inverted
        </label>
      </div>

      <div className="flex h-[17px] shrink-0 items-center border-b border-[#363636] pb-px pl-[140px]">
        <StopwatchIcon />
        <span className="w-[198px] pl-[6px]">Mask Path</span>
        <button type="button" className="border-b border-dotted border-[#c08d0c] leading-3 text-[#c9960f]">Shape...</button>
      </div>

      <div className="min-h-0 flex-1 pt-[18px] pl-[200px]">
        <p className="font-['Open_Sans',sans-serif] text-[28px] leading-9 text-[#ff0]">ctrl+v</p>
      </div>

      <div className="flex h-[19px] shrink-0 items-center border-t border-[#222] pl-[5px]">
        <button type="button" aria-label="Layer switches" className="border border-black bg-[#262626]">
          <Icon w={13} h={12}>
            <path d="M.5.5h7v7h-7zM2.500 2.500h7v7h-7zM4.500 4.500h7v7h-7z" fill="#333" stroke="currentColor" />
            <path d="M6 8l2 2 3-4" fill="none" stroke="#fff" />
          </Icon>
        </button>
        <Icon w={14} h={12} className="ml-1">
          <circle cx="5" cy="5" r="4" fill="none" stroke="currentColor" />
          <path d="M5.500 4.500h7v7h-7z" fill="none" stroke="currentColor" />
          <path d="M6 5h3q1 3-3 4z" />
        </Icon>
        <Icon w={12} h={12} className="ml-1">
          <path d="M2 0h2v5L2 6l2 1v5H2V8L0 6l2-2zM8 0h2v4l2 2-2 2v4H8V7l2-1-2-1zM5 5h2v2H5z" />
        </Icon>
        <button type="button" className="ml-[292px] h-[15px] w-[167px] border border-[#161616] bg-linear-to-b from-[#4a4a4a] to-[#404040] text-[10px] leading-3">
          Toggle Switches / Modes
        </button>
      </div>
    </div>
  )
}

function KeyMarker() {
  return (
    <div className="h-[17px] border-b border-[#363636] pt-[2px] pl-1">
      <Icon w={7} h={11} className="text-white">
        <path d="M0 0h7v1H5v9h2v1H0v-1h2V1H0z" />
      </Icon>
    </div>
  )
}

function TrackArea() {
  return (
    <div className="flex min-w-0 flex-1 flex-col">
      <div className="flex min-h-0 flex-1">
        <div className="relative flex min-w-0 flex-1 flex-col bg-[#404040]">
          <div className="mt-[5px] flex h-[10px] shrink-0">
            <span className="w-2 rounded-tl-md border border-black bg-[#c08d0c]" />
            <span className="flex-1 border-y border-black bg-[#7c7c7c]" />
            <span className="w-[7px] rounded-tr-md border border-black bg-[#c08d0c]" />
          </div>
          <div className="flex h-5 shrink-0 pr-[7px] pl-2 text-[10px]">
            {seconds.map((label, i) => (
              <div key={label} className={i === seconds.length - 1 ? "flex-1" : "flex-2"}>
                <div className="flex w-0 flex-col items-center whitespace-nowrap">
                  <span className="leading-[15px]">{label}</span>
                  <span className="h-[5px] w-px bg-[#a5a5a5]" />
                </div>
              </div>
            ))}
          </div>
          <div className="flex h-[17px] shrink-0 border-t border-black">
            <span className="flex w-2 items-center justify-center border border-black bg-[#c08d0c]">
              <span className="h-3 w-[3px] border-x border-[#3a2c05]" />
            </span>
            <span className="flex-1 border-b border-black bg-[#757575]" />
            <span className="flex w-[7px] items-center justify-center border border-black bg-[#c08d0c]">
              <span className="h-3 w-[3px] border-x border-[#3a2c05]" />
            </span>
          </div>
          <div className="mr-[7px] ml-2 h-[3px] shrink-0 bg-[#18c01e]" />
          <div className="relative flex min-h-0 flex-1 flex-col border-t border-[#111] bg-[#4e4e4e]">
            <div className="h-[17px] shrink-0 border-b border-[#363636] pr-2 pl-2">
              <div className="h-4 border-t border-[#cf8080] bg-linear-to-b from-[#b65656] to-[#a04242]" />
            </div>
            <KeyMarker />
            <KeyMarker />
            <span className="absolute inset-y-0 right-0 w-[7px] bg-black/15" />
          </div>
          {/* current time indicator */}
          <span className="absolute top-[6px] bottom-0 left-[7px] w-px bg-[#f00]" />
          <Icon w={13} h={14} className="absolute top-5 left-[1px]">
            <path d="M1 3q0-2 2-2h7q2 0 2 2v4l-5.500 6L1 7z" fill="#e0a80d" stroke="#8c6500" />
            <path d="M4.500 3v4M6.500 3v4M8.500 3v4" stroke="#5b4300" />
          </Icon>
        </div>
        <div className="flex w-[18px] shrink-0 flex-col items-center">
          <Icon w={12} h={14} className="mt-[36px]">
            <path d="M.5.5h11V9L6 13.500.5 9z" fill="#a5a5a5" stroke="#ddd" />
          </Icon>
          <span className="mt-[4px] flex h-[19px] w-full items-center justify-center border-y border-black">
            <Icon w={13} h={12}>
              <circle cx="5" cy="5" r="4" fill="none" stroke="currentColor" strokeWidth="1.500" />
              <path d="M7.500 3.500h5v6h-5z" fill="#444" stroke="currentColor" />
              <path d="M0 12l4.500-7L9 12z" />
            </Icon>
          </span>
          <div className="flex w-full flex-1 flex-col items-center justify-between border border-t-0 border-[#151515] bg-[#393939] py-[5px] text-[#6c6c6c]">
            <ArrowHead dir="up" />
            <ArrowHead dir="down" />
          </div>
        </div>
      </div>
      <div className="flex h-[19px] shrink-0 items-center border-t border-[#222] pl-[6px]">
        <Icon w={10} h={5}>
          <path d="M0 5l3-4 1.500 2L6 1l4 4z" />
        </Icon>
        <input
          type="range"
          aria-label="Timeline zoom"
          defaultValue={0}
          className="mr-3 ml-[10px] h-3 w-12 appearance-none bg-[linear-gradient(#111,#111)] bg-[length:100%_4px] bg-center bg-no-repeat [&::-webkit-slider-thumb]:h-2 [&::-webkit-slider-thumb]:w-2 [&::-webkit-slider-thumb]:appearance-none [&::-webkit-slider-thumb]:rounded-t-sm [&::-webkit-slider-thumb]:border [&::-webkit-slider-thumb]:border-black [&::-webkit-slider-thumb]:bg-[#5a5a5a]"
        />
        <Icon w={17} h={8}>
          <path d="M0 8l5-6 2 2 2.500-4L13 4l1-1 3 5z" />
        </Icon>
        <div className="ml-[5px] flex h-full flex-1 items-center justify-between border border-t-0 border-[#1a1a1a] bg-[#393939] px-[2px] text-[#6c6c6c]">
          <ArrowHead dir="left" />
          <ArrowHead dir="right" />
        </div>
        <span className="w-[18px]" />
      </div>
    </div>
  )
}

function TimelinePanel() {
  return (
    <section className="flex min-w-0 flex-1 flex-col border-l border-[#2b2b2b] bg-[#424242]">
      <TabStrip>
        <ActiveTab label="Comp 1">
          <span className="h-[10px] w-[10px] bg-[#a89678]" />
        </ActiveTab>
        <Tab label="Render Queue" className="w-[99px]" />
      </TabStrip>
      <div className="flex min-h-0 flex-1">
        <LayerOutline />
        <TrackArea />
      </div>
    </section>
  )
}

/* start and end x of every line in a paragraph glyph */
const alignments: { name: string; lines: [number, number][] }[] = [
  { name: "Left align", lines: [[0, 14], [0, 9], [0, 12], [0, 7], [0, 14], [0, 10], [0, 14]] },
  { name: "Center", lines: [[1, 13], [4, 10], [2, 12], [5, 9], [0, 14], [3, 11], [0, 14]] },
  { name: "Right align", lines: [[0, 14], [5, 14], [2, 14], [7, 14], [0, 14], [4, 14], [0, 14]] },
  { name: "Justify last left", lines: [[0, 14], [0, 14], [0, 14], [0, 14], [0, 14], [0, 14], [0, 9]] },
  { name: "Justify last centered", lines: [[0, 14], [0, 14], [0, 14], [0, 14], [0, 14], [0, 14], [3, 11]] },
  { name: "Justify last right", lines: [[0, 14], [0, 14], [0, 14], [0, 14], [0, 14], [0, 14], [5, 14]] },
  { name: "Justify all", lines: [[0, 14], [0, 14], [0, 14], [0, 14], [0, 14], [0, 14], [0, 14]] },
]

const indents: { name: string; path: string }[] = [
  { name: "Indent left margin", path: "M0 5h5v1H0zM3 3l3 2.500L3 8zM7 0h1v11H7zM9 1h9v1H9zM9 3h6v1H9zM9 5h9v1H9zM9 7h6v1H9zM9 9h9v1H9z" },
  { name: "Space before", path: "M0 1h4v1H0zM3 0l3 1.500L3 4zM7 6h11v1H7zM7 8h9v1H7zM7 10h11v1H7z" },
  { name: "Indent first line", path: "M0 1h6v1H0zM5 0l3 1.500L5 4zM10 1h8v1h-8zM8 3h10v1H8zM8 5h8v1H8zM8 7h10v1H8zM8 9h8v1H8z" },
  { name: "Indent right margin", path: "M0 1h9v1H0zM0 3h6v1H0zM0 5h9v1H0zM0 7h6v1H0zM0 9h9v1H0zM11 0h1v11h-1zM13 5h5v1h-5zM15 3l-3 2.500L15 8z" },
  { name: "Space after", path: "M7 0h9v1H7zM7 2h11v1H7zM7 4h9v1H7zM0 9h4v1H0zM3 8l3 1.500L3 12z" },
]

function ParagraphPanel() {
  return (
    <section className="flex w-[206px] shrink-0 flex-col border border-t-0 border-[#555] bg-[#424242]">
      <TabStrip>
        <ActiveTab label="Paragraph" />
      </TabStrip>
      <div className="mr-[18px] ml-[6px] flex items-center gap-[9px] border-b border-[#252525] pt-[6px] pb-[5px]">
        {alignments.map((align, n) => (
          <button
            type="button"
            key={align.name}
            aria-label={align.name}
            className={clsx(
              "flex h-5 items-center justify-center",
              n === 0 ? "w-5 border border-black bg-[#262626]" : "w-4",
              (n === 3 || n === 6) && "ml-1",
            )}
          >
            <Icon w={14} h={14}>
              {align.lines.map(([from, to], i) => (
                <path key={i} d={`M${from} ${i * 2 + 0.5}H${to}`} stroke="currentColor" />
              ))}
            </Icon>
          </button>
        ))}
      </div>
      <div className="grid grid-cols-[72px_66px_60px] gap-y-[3px] pt-[3px] pl-[5px]">
        {indents.map((indent) => (
          <label key={indent.name} className="flex h-[15px] items-center gap-[3px]">
            <Icon w={18} h={12}>
              {indent.name === "Space before" && <path d="M7 1h11v4H7z" fill="#777" />}
              {indent.name === "Space after" && <path d="M7 7h11v4H7z" fill="#777" />}
              <path d={indent.path} />
            </Icon>
            <input
              type="text"
              aria-label={indent.name}
              defaultValue="0"
              className="h-[14px] w-[7px] border-b border-dotted border-[#c08d0c] text-[#c9960f] outline-none"
            />
            px
          </label>
        ))}
      </div>
    </section>
  )
}

/* Floating input-method bar */
function InputMethodBar() {
  return (
    <div className="fixed right-0 bottom-[68px] flex h-6 w-[176px] items-center justify-between border-y border-[#c5d7e8] bg-[#fcfeff] pr-1 pl-6 text-[#1b76cf]">
      <svg className="absolute -top-[3px] -left-[11px]" width="29" height="28" viewBox="0 0 29 28" aria-hidden="true">
        <rect x="2" y="2" width="24" height="23" rx="3" fill="#f4511e" transform="rotate(-9 14 14)" />
        <path d="M21 7.500Q13 5 9.500 8.500T14 13.500Q20 14.500 18 18T7.500 20" fill="none" stroke="#fff" strokeWidth="3.600" />
      </svg>
      <span className="font-['Noto_Sans_CJK_SC',sans-serif] text-[14px] leading-5 font-bold">英</span>
      <Icon w={14} h={14}>
        <path d="M9 1q5 4 2.500 8.500T1 12q6 0 8-4t0-7z" stroke="currentColor" />
      </Icon>
      <Icon w={13} h={13}>
        <circle cx="4" cy="3.500" r="2" />
        <path d="M7 7h3v2q0 2-2.500 3.500L7 12q1.500-1 1.500-2H7z" />
      </Icon>
      <Icon w={16} h={13}>
        <rect y="1" width="16" height="11" rx="1.500" />
        <path d="M2 4h12M2 6.500h12" stroke="#fff" strokeWidth="1.300" strokeDasharray="1.500 1" />
        <path d="M4 9.500h8" stroke="#fff" strokeWidth="1.300" />
      </Icon>
      <Icon w={16} h={15}>
        <circle cx="6" cy="3.500" r="3" />
        <path d="M0 13q0-5 4-6l2 2 2-2q3 .5 4 3v3z" />
        <path d="M6 8h10v7H6z" fill="#fff" />
        <text x="6" y="14.500" fontSize="8" fontWeight="bold">15</text>
      </Icon>
      <Icon w={14} h={13}>
        <path d="M4 0q3 3 6 0l4 3-2 3-1.500-1v8h-7V5L2 6 0 3z" />
      </Icon>
      <Icon w={16} h={14}>
        <path d="M1 13q-2-1 0-3l6-5q-1-4 4-5l-2 3 2 2 3-2q1 5-4 5l-6 5q-1.500 1.500-3 0z" />
      </Icon>
    </div>
  )
}

export default function App() {
  return (
    <div className="flex h-screen flex-col overflow-hidden bg-[#3b4856] font-['Noto_Sans','DejaVu_Sans',sans-serif] text-[11px] leading-[13px] text-[#c8c8c8]">
      <TitleBar />
      <div className="flex min-h-0 flex-1">
        <div className="w-2 shrink-0 border-r border-l border-r-[#c4cad0] border-l-[#161b20] bg-[linear-gradient(#777d86_0,#a3a7ab_80px,#cfd0d2_171px,#303c49_172px,#35424f_70%,#5a7388_90%,#303c49_100%)]" />
        <div className="flex min-w-0 flex-1 flex-col border-l border-black bg-[#141414]">
          <MenuBar />
          <Toolbar />
          <main className="flex min-h-0 flex-1 flex-col gap-1 pt-[3px]">
            <div className="flex min-h-0 flex-1 gap-1">
              <ProjectPanel />
              <CompositionPanel />
              <RightColumn />
            </div>
            <div className="flex h-[239px] shrink-0 gap-1">
              <TimelinePanel />
              <ParagraphPanel />
            </div>
          </main>
        </div>
        <div className="w-[9px] shrink-0 border-r-2 border-l border-r-[#14181c] border-l-[#111] bg-[linear-gradient(#8c939b_0,#b0b5b9_80px,#cfd2d4_171px,#3b4a59_172px,#35424f_100%)]" />
      </div>
      <div className="h-[5px] shrink-0 border-t border-[#a5adb5] bg-[linear-gradient(90deg,#303c49,#5a7388_15%,#3b4856_30%,#35424f)]" />
      <InputMethodBar />
      <div className="fixed right-[2px] bottom-[18px] flex h-[58px] w-2 justify-center rounded-full bg-[#2c2c2c] pt-[15px]">
        <span className="h-10 w-[2px] bg-linear-to-b from-[#ff5a1e] via-[#c8c81e] to-[#1ec81e]" />
      </div>
    </div>
  )
}
